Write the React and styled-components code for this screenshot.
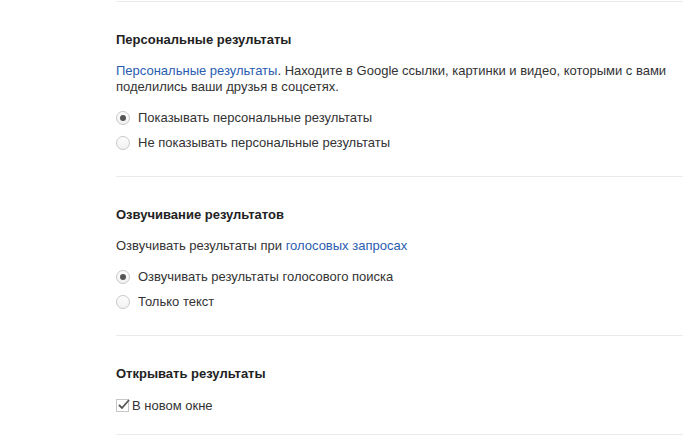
import styled, { createGlobalStyle } from 'styled-components';

const GlobalStyle = createGlobalStyle`
  body {
    margin: 0;
    background: #fff;
    font-family: 'Liberation Sans', Arial, sans-serif;
    font-size: 13px;
    color: #222;
  }
`;

const Page = styled.div`
  padding-top: 1px;
  padding-left: 116px;
`;

const Section = styled.section`
  border-top: 1px solid #ebebeb;
  padding: 30px 0 ${(p) => p.$bottom || 21}px;

  &:last-child {
    border-bottom: 1px solid #ebebeb;
  }
`;

const Heading = styled.h3`
  margin: 0;
  font-size: 13px;
  line-height: 16px;
  font-weight: bold;
  color: #222;
`;

const Text = styled.p`
  margin: 15px 0 0;
  line-height: 16px;
  color: #333;
  max-width: 560px;
`;

const Link = styled.a`
  color: #2a5db0;
  text-decoration: none;
`;

const Options = styled.div`
  margin-top: ${(p) => p.$top || 10}px;
  display: flex;
  flex-direction: column;
`;

const Option = styled.label`
  display: flex;
  align-items: center;
  gap: ${(p) => p.$gap || 8}px;
  height: 25px;
  color: #333;
  cursor: pointer;
`;

const Radio = styled.span`
  width: 14px;
  height: 14px;
  box-sizing: border-box;
  border-radius: 50%;
  border: 1px solid #c8c8c8;
  background: linear-gradient(#fdfdfd, #f1f1f1);
  display: flex;
  align-items: center;
  justify-content: center;

  &::after {
    content: '';
    width: 6px;
    height: 6px;
    border-radius: 50%;
    background: ${(p) => (p.$checked ? '#555' : 'transparent')};
  }
`;

const Box = styled.span`
  width: 13px;
  height: 13px;
  box-sizing: border-box;
  border: 1px solid #c6c6c6;
  background: #fff;
  position: relative;

  svg {
    position: absolute;
    left: 0;
    top: -3px;
  }
`;

const RadioGroup = ({ items, value }) => (
  <Options>
    {items.map((item, i) => (
      <Option key={item}>
        <Radio $checked={i === value} />
        {item}
      </Option>
    ))}
  </Options>
);

const App = () => {
  return (
    <Page>
      <GlobalStyle />
      <Section>
        <Heading>Персональные результаты</Heading>
        <Text>
          <Link href="#">Персональные результаты</Link>. Находите в Google ссылки, картинки и видео, которыми с вами поделились ваши друзья в соцсетях.
        </Text>
        <RadioGroup
          value={0}
          items={['Показывать персональные результаты', 'Не показывать персональные результаты']}
        />
      </Section>
      <Section>
        <Heading>Озвучивание результатов</Heading>
        <Text>
          Озвучивать результаты при <Link href="#">голосовых запросах</Link>
        </Text>
        <RadioGroup value={0} items={['Озвучивать результаты голосового поиска', 'Только текст']} />
      </Section>
      <Section $bottom={16}>
        <Heading>Открывать результаты</Heading>
        <Options $top={11}>
          <Option $gap={3}>
            <Box>
              <svg width="14" height="14" viewBox="0 0 14 14">
                <path d="M2 8 L5 11 L12 3" fill="none" stroke="#555" strokeWidth="1.8" />
              </svg>
            </Box>
            В новом окне
          </Option>
        </Options>
      </Section>
    </Page>
  );
};

export default App;
